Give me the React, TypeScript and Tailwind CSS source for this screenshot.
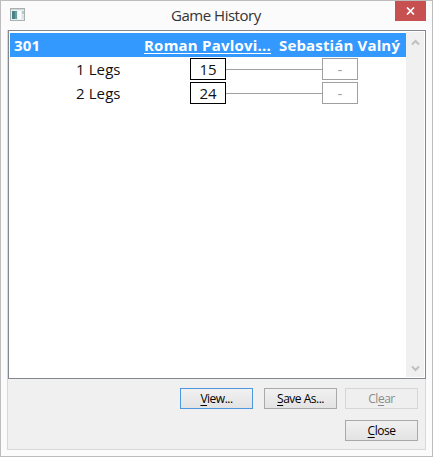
interface Leg {
  label: string;
  home: string;
  away: string;
}

const legs: Leg[] = [
  { label: "1 Legs", home: "15", away: "-" },
  { label: "2 Legs", home: "24", away: "-" },
];

function WindowIcon() {
  return (
    <svg className="w-[15px] h-[13px]" viewBox="0 0 15 13" shapeRendering="crispEdges">
      <rect width="15" height="13" fill="#a9b0b0" />
      <rect x="1" y="2" width="13" height="10" fill="#e9f0ef" />
      <rect x="1" y="1" width="13" height="1" fill="#d2d8d8" />
      <rect x="2" y="3" width="5" height="8" fill="#478386" />
      <rect x="5" y="3" width="2" height="8" fill="#6b9fa0" />
      <rect x="8" y="3" width="3" height="8" fill="#fafcfc" />
      <rect x="12" y="3" width="2" height="3" fill="#b4c9c8" />
      <rect x="12" y="7" width="2" height="4" fill="#d9e3e2" />
    </svg>
  );
}

function TitleBar() {
  return (
    <div className="h-[29px] flex items-start justify-between">
      <div className="w-[60px] pl-[9px] pt-[7px]">
        <WindowIcon />
      </div>
      <h1 className="pt-[4px] pl-[3px] w-[97px] text-[15px] leading-[20px] tracking-[-0.48px] text-[#333] whitespace-nowrap">
        Game History
      </h1>
      <div className="w-[60px] flex justify-end pr-[6px]">
        <button className="w-[31px] h-[20px] bg-[#c75050] flex items-center justify-center">
          <svg className="w-[9px] h-[8px]" viewBox="0 0 9 8" fill="none" stroke="white" strokeWidth="1.7">
            <path d="M1 .5l7 7M8 .5l-7 7" />
          </svg>
        </button>
      </div>
    </div>
  );
}

function Scrollbar() {
  return (
    <div className="w-[18px] bg-[#f0f0f0] flex flex-col justify-between items-center pt-[7px] pb-[5px]">
      <svg className="w-[9px] h-[7px]" viewBox="0 0 9 7" fill="none" stroke="#bfbfbf" strokeWidth="2">
        <path d="M1 5.5l3.5-3.5L8 5.5" />
      </svg>
      <svg className="w-[9px] h-[7px]" viewBox="0 0 9 7" fill="none" stroke="#bfbfbf" strokeWidth="2">
        <path d="M1 1.5l3.5 3.5L8 1.5" />
      </svg>
    </div>
  );
}

function LegRow({ leg }: { leg: Leg }) {
  return (
    <div className="h-[22px] flex items-center text-[15px] leading-[20px]">
      <span className="w-[180px] pl-[66px] tracking-[0.1px] text-[#111]">{leg.label}</span>
      <span className="w-[36px] h-[22px] border border-black text-center text-[#111]">{leg.home}</span>
      <span className="w-[96px] h-px mt-px bg-[#a0a0a0]" />
      <span className="w-[36px] h-[22px] border border-[#a0a0a0] text-center text-[#a0a0a0]">{leg.away}</span>
    </div>
  );
}

function DialogButton({ before = "", accessKey, after, look = "normal" }: {
  before?: string;
  accessKey: string;
  after: string;
  look?: "normal" | "default" | "disabled";
}) {
  const looks = {
    normal: "border-[#a9a9a9] bg-linear-to-b from-[#f1f1f1] to-[#e3e3e3] text-black",
    default: "border-[#4c97de] bg-linear-to-b from-[#f1f1f1] to-[#e3e3e3] text-black",
    disabled: "border-[#d6d6d6] bg-[#efefef] text-[#8b8b8b]",
  };
  return (
    <button
      disabled={look === "disabled"}
      className={`block w-[73px] h-[21px] border text-[12px] leading-[19px] tracking-[-0.5px] whitespace-nowrap ${looks[look]}`}
    >
      {before}
      <span className="underline underline-offset-2">{accessKey}</span>
      {after}
    </button>
  );
}

export default function App() {
  return (
    <div className="w-[433px] h-[457px] bg-[#fbfbfb] border border-[#bdbdbd] font-['Open_Sans','Noto_Sans',sans-serif]">
      <TitleBar />
      <div className="ml-[6px] w-[419px] h-[420px] bg-[#f0f0f0] border border-[#d8d8d8] border-t-0">
        <div className="w-[418px] h-[349px] bg-white border border-[#828790] p-px flex">
          <div className="w-[396px] pt-px">
            <div className="h-[24px] bg-[#3399ff] text-white font-bold text-[15px] leading-[24px] flex whitespace-nowrap">
              <span className="w-[134px] pl-[4px] tracking-[0.15px]">301</span>
              <span className="w-[135px]">
                <span className="tracking-[0.22px] underline decoration-1 underline-offset-2">Roman Pavlovi...</span>
              </span>
              <span className="tracking-[0.15px]">Sebastián Valný</span>
            </div>
            <div className="pt-[1px] flex flex-col gap-[2px]">
              {legs.map((leg) => (
                <LegRow key={leg.label} leg={leg} />
              ))}
            </div>
          </div>
          <Scrollbar />
        </div>
        <div className="flex justify-end pt-[9px] pr-[7px]">
          <div className="mr-[11px]">
            <DialogButton accessKey="V" after="iew..." look="default" />
          </div>
          <div className="mr-[8px]">
            <DialogButton accessKey="S" after="ave As..." />
          </div>
          <DialogButton before="Cl" accessKey="e" after="ar" look="disabled" />
        </div>
        <div className="flex justify-end pt-[11px] pr-[7px]">
          <DialogButton accessKey="C" after="lose" />
        </div>
      </div>
    </div>
  );
}
